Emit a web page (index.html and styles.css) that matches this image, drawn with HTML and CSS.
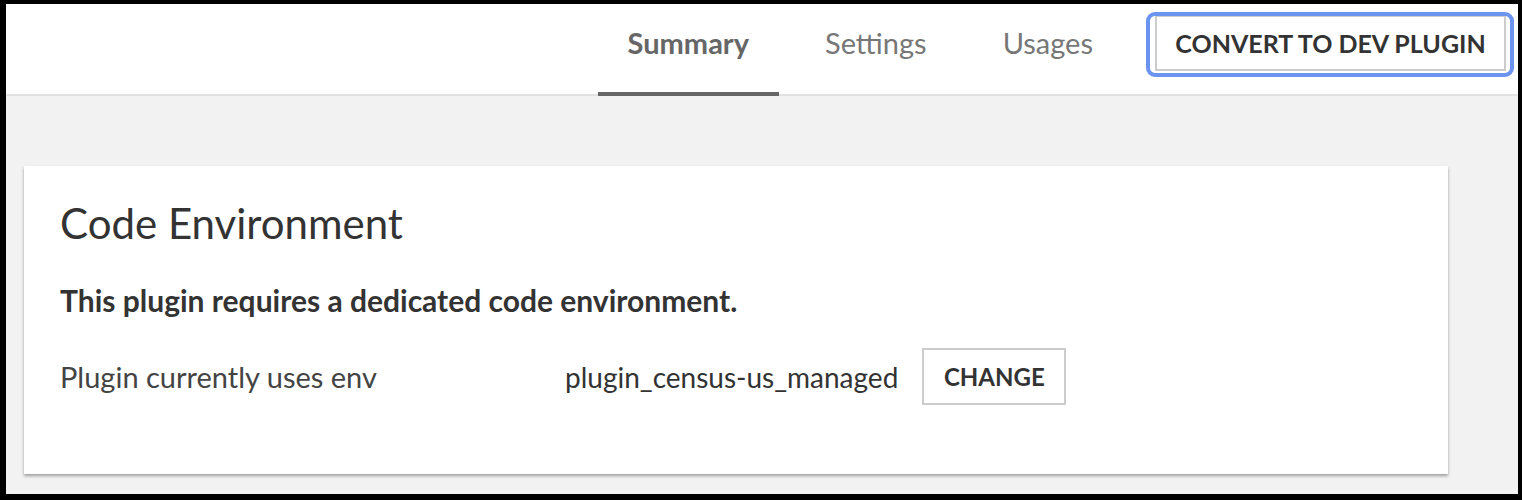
FILE: index.html
```html
<!DOCTYPE html>
<html>
<head>
<meta charset="utf-8">
<link rel="stylesheet" href="styles.css">
</head>
<body>
<div class="frame">
  <header class="topbar">
    <nav class="tabs">
      <a class="tab active">Summary</a>
      <a class="tab">Settings</a>
      <a class="tab">Usages</a>
    </nav>
    <button class="btn btn-convert">CONVERT TO DEV PLUGIN</button>
  </header>
  <main class="content">
    <section class="card">
      <h2 class="card-title">Code Environment</h2>
      <p class="card-lead">This plugin requires a dedicated code environment.</p>
      <div class="env-row">
        <span class="env-label">Plugin currently uses env</span>
        <span class="env-value">plugin_census-us_managed</span>
        <button class="btn btn-change">CHANGE</button>
      </div>
    </section>
  </main>
</div>
</body>
</html>
```

FILE: styles.css
```css
html, body {
  margin: 0;
  padding: 0;
  background: #000;
}

body {
  font-family: Lato, "Open Sans", Arial, sans-serif;
  color: #333;
}

.frame {
  box-sizing: border-box;
  width: 1522px;
  height: 500px;
  border-style: solid;
  border-color: #000;
  border-width: 4px 4px 6px 6px;
  background: #f2f2f2;
  display: flex;
  flex-direction: column;
  overflow: hidden;
}

.topbar {
  box-sizing: border-box;
  height: 92px;
  flex: none;
  background: #fff;
  border-bottom: 2px solid #e2e2e2;
  display: flex;
  justify-content: flex-end;
  align-items: flex-start;
  padding-right: 12px;
}

.tabs {
  display: flex;
  gap: 16px;
  height: 92px;
  margin-right: 32px;
}

.tab {
  box-sizing: border-box;
  height: 92px;
  padding: 0 30px 12px;
  display: flex;
  align-items: center;
  font-size: 29px;
  color: #777;
  border-bottom: 4px solid transparent;
  margin-bottom: -2px;
}

.tab.active {
  font-weight: 700;
  color: #666;
  border-bottom-color: #666;
}

.btn {
  font-family: Lato, "Open Sans", Arial, sans-serif;
  background: #fff;
  border: 2px solid #ccc;
  color: #333;
  font-weight: 700;
  cursor: pointer;
}

.btn-convert {
  position: relative;
  margin-top: 11px;
  height: 56px;
  width: 351px;
  padding: 0;
  font-size: 25px;
}

.btn-convert::after {
  content: "";
  position: absolute;
  top: -5px;
  left: -11px;
  right: -10px;
  bottom: -8px;
  border: 4px solid #6b93f0;
  border-radius: 9px;
}

.content {
  flex: 1;
  padding: 70px 70px 0 18px;
}

.card {
  box-sizing: border-box;
  height: 308px;
  background: #fff;
  padding: 27px 36px;
  box-shadow: 0 2px 3px rgba(0, 0, 0, 0.35);
}

.card-title {
  margin: 0;
  font-size: 42px;
  font-weight: 400;
  line-height: 60px;
  color: #333;
}

.card-lead {
  margin: 29px 0 0;
  font-size: 30px;
  font-weight: 700;
  line-height: 36px;
  color: #333;
}

.env-row {
  margin-top: 30px;
  display: flex;
  align-items: center;
}

.env-label {
  width: 505px;
  font-size: 29px;
  color: #444;
}

.env-value {
  font-size: 28px;
  color: #333;
  margin-right: 24px;
}

.btn-change {
  height: 57px;
  width: 144px;
  padding: 0;
  font-size: 24px;
}
```
